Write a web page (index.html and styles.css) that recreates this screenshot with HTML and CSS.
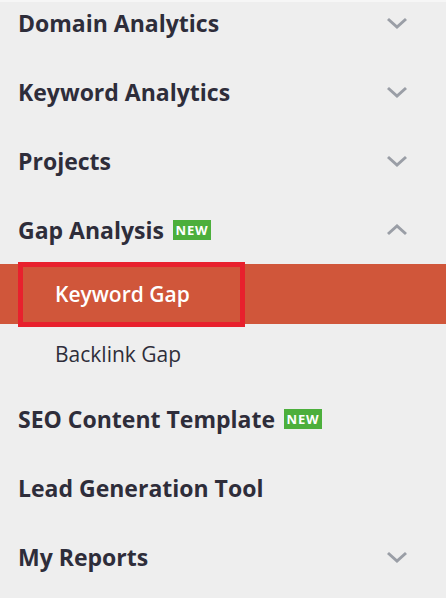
FILE: index.html
```html
<!DOCTYPE html>
<html>
<head>
<meta charset="utf-8">
<link rel="stylesheet" href="styles.css">
</head>
<body>
<nav class="menu">
  <div class="row"><span class="label">Domain Analytics</span><svg class="chev" viewBox="0 0 22 12"><path d="M2 2 L11 10 L20 2"/></svg></div>
  <div class="row"><span class="label">Keyword Analytics</span><svg class="chev" viewBox="0 0 22 12"><path d="M2 2 L11 10 L20 2"/></svg></div>
  <div class="row"><span class="label">Projects</span><svg class="chev" viewBox="0 0 22 12"><path d="M2 2 L11 10 L20 2"/></svg></div>
  <div class="row"><span class="label">Gap Analysis</span><span class="badge">NEW</span><svg class="chev" viewBox="0 0 22 12"><path d="M2 10 L11 2 L20 10"/></svg></div>
  <div class="sub active"><span class="sublabel">Keyword Gap</span><span class="highlight"></span></div>
  <div class="sub"><span class="sublabel">Backlink Gap</span></div>
  <div class="row"><span class="label">SEO Content Template</span><span class="badge">NEW</span></div>
  <div class="row"><span class="label">Lead Generation Tool</span></div>
  <div class="row"><span class="label">My Reports</span><svg class="chev" viewBox="0 0 22 12"><path d="M2 2 L11 10 L20 2"/></svg></div>
</nav>
</body>
</html>
```
FILE: styles.css
```css
html, body {
  margin: 0;
  padding: 0;
  background: #eeeeee;
  height: 100%;
  overflow: hidden;
}
body {
  font-family: "Open Sans", "DejaVu Sans", sans-serif;
  color: #2e2d3a;
  border-top: 2px solid #f6f6f6;
  box-sizing: border-box;
}
.menu {
  display: flex;
  flex-direction: column;
  margin-top: -14px;
}
.row {
  height: 69px;
  display: flex;
  align-items: center;
  padding-left: 18px;
  padding-right: 38px;
}
.label {
  font-size: 23px;
  font-weight: 700;
  letter-spacing: 0;
}
.badge {
  margin-left: 9px;
  background: #4caf3c;
  color: #fff;
  font-size: 13px;
  font-weight: 700;
  height: 20px;
  width: 38px;
  display: flex;
  align-items: center;
  justify-content: center;
  letter-spacing: 0.8px;
}
.chev {
  margin-left: auto;
  width: 22px;
  height: 12px;
  fill: none;
  stroke: #9a9ea6;
  stroke-width: 3;
}
.sub {
  height: 60px;
  display: flex;
  align-items: center;
  padding-left: 55px;
  position: relative;
}
.sublabel {
  font-size: 21px;
  font-weight: 400;
}
.sub.active {
  background: #d0563a;
  color: #ffffff;
}
.sub.active .sublabel {
  font-weight: 600;
}
.highlight {
  position: absolute;
  left: 18px;
  top: -2px;
  width: 227px;
  height: 65px;
  box-sizing: border-box;
  border: 5px solid #e8202d;
}
```
